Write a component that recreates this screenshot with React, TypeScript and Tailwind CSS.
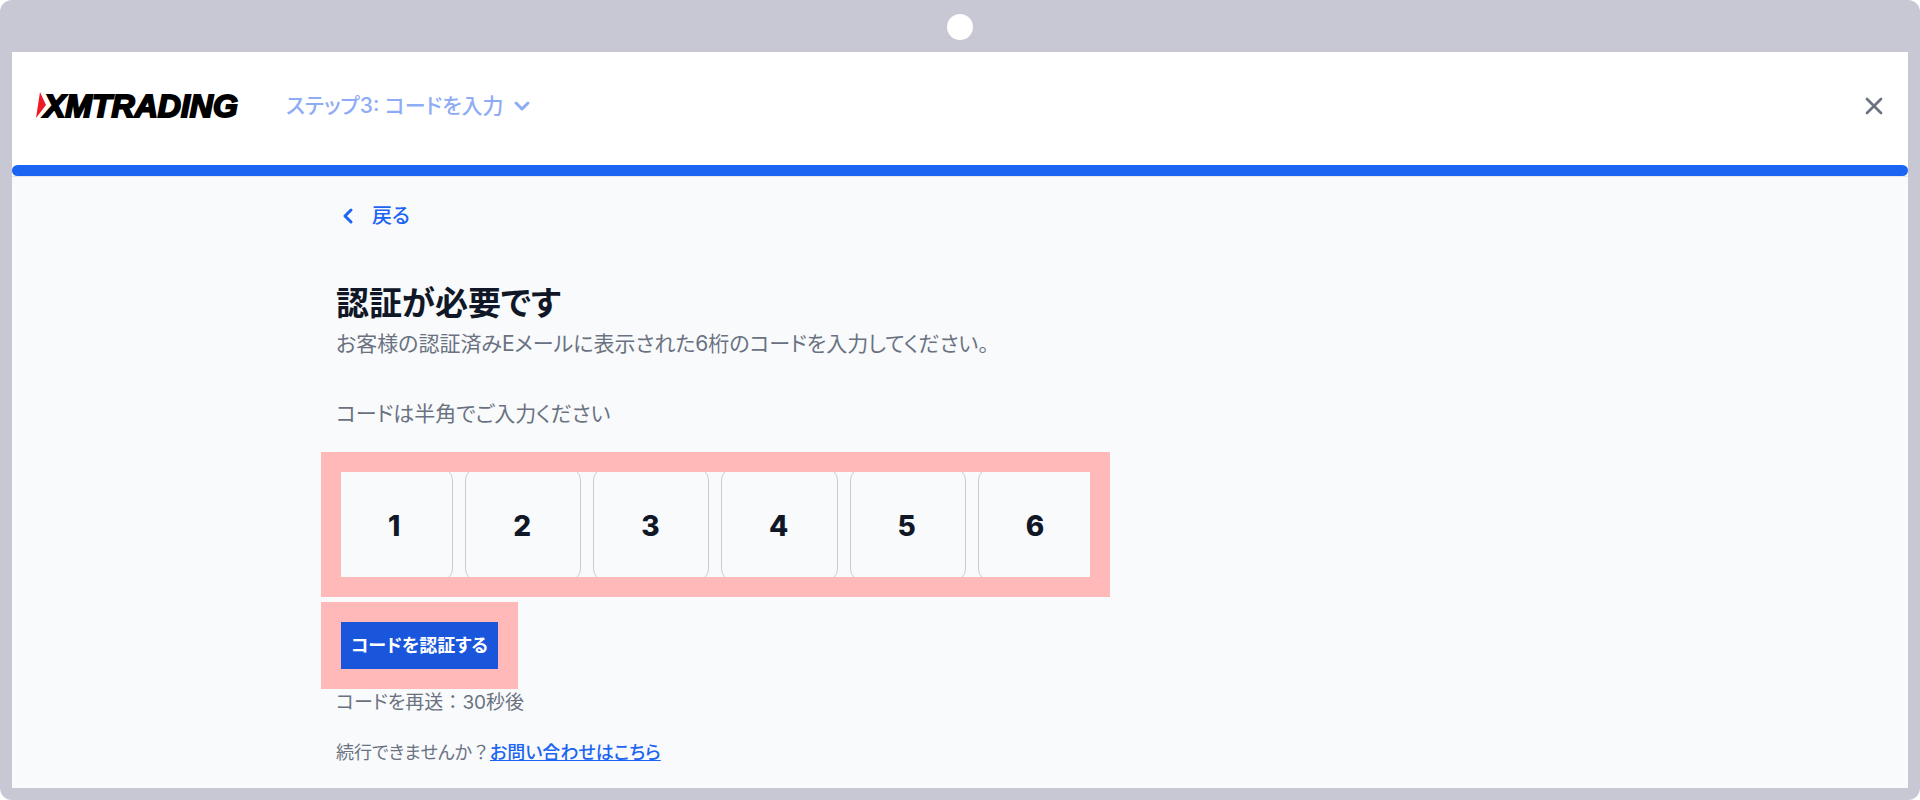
import React, { useState } from 'react';
import { ChevronDown, ChevronLeft, X } from 'lucide-react';

const Logo: React.FC = () => (
  <a href="#" aria-label="XMTRADING" className="block">
    <svg width="216" height="42" viewBox="0 0 216 42" className="block">
      <path d="M4 7 L10 20 L0 33 Z" fill="#ed1c24" />
      <text
        x="8"
        y="32"
        fontSize="32"
        fontWeight="700"
        fontStyle="italic"
        stroke="#000"
        strokeWidth="2"
        className="font-['Liberation_Sans',sans-serif]"
      >
        XMTRADING
      </text>
    </svg>
  </a>
);

const Header: React.FC = () => (
  <header className="bg-white border-b border-gray-200">
    <div className="h-[113px] pl-6 pr-5 pb-1.5 flex items-center justify-between">
      <div className="flex items-center gap-[34px]">
        <Logo />
        <button type="button" className="flex items-center gap-1.5 text-[21px] leading-8 font-medium text-[#8eabf5]">
          ステップ3: コードを入力
          <ChevronDown size={24} strokeWidth={3} />
        </button>
      </div>
      <button type="button" aria-label="閉じる" className="text-gray-500">
        <X size={28} strokeWidth={2.3} />
      </button>
    </div>
    <div className="h-[11px] rounded-md bg-[#1c64f2]" />
  </header>
);

const CodeInputs: React.FC = () => {
  const [digits, setDigits] = useState(['1', '2', '3', '4', '5', '6']);

  const handleChange = (index: number, value: string) => {
    setDigits(digits.map((d, i) => (i === index ? value.slice(-1) : d)));
  };

  return (
    <div className="max-w-[789px] border-20 border-[#ffb9b9] overflow-hidden">
      <div className="-m-1 grid grid-cols-6 gap-3">
        {digits.map((digit, i) => (
          <input
            key={i}
            type="text"
            inputMode="numeric"
            aria-label={`コード ${i + 1}桁目`}
            value={digit}
            onChange={(e) => handleChange(i, e.target.value)}
            className="w-full min-w-0 h-[113px] pt-0.5 pr-0.5 rounded-xl border border-[#c9ccd2] bg-gray-50 text-center font-['Inter',sans-serif] text-[28px] font-extrabold text-gray-900"
          />
        ))}
      </div>
    </div>
  );
};

const App: React.FC = () => {
  return (
    <div className="bg-white">
      <div
        lang="ja"
        className="min-h-screen flex flex-col rounded-xl bg-[#c8c7d4] px-3 pb-3 font-['Inter','Noto_Sans_CJK_JP',sans-serif] [font-feature-settings:'palt']"
      >
        <div className="h-[52px] pt-0.5 flex items-center justify-center">
          <span className="size-[26px] rounded-full bg-white" />
        </div>

        <div className="flex-1 flex flex-col bg-gray-50">
          <Header />

          <main className="w-full max-w-[1278px] mx-auto pt-[23px]">
            <div className="pl-[15px]">
              <a href="#" className="inline-flex items-center gap-3 text-xl leading-8 font-medium text-[#1c64f2]">
                <ChevronLeft size={24} strokeWidth={3} />
                戻る
              </a>
              <h1 className="mt-12 text-[33px] leading-[42px] font-bold text-gray-900">認証が必要です</h1>
              <p className="mt-0.5 text-[21px] leading-9 text-gray-500">
                お客様の認証済みEメールに表示された6桁のコードを入力してください。
              </p>
              <p className="mt-[34px] mb-5 text-[21px] leading-9 text-gray-500">
                コードは半角でご入力ください
              </p>
            </div>

            <CodeInputs />

            <div className="mt-[5px] w-fit border-20 border-[#ffb9b9]">
              <button type="button" className="block h-[47px] px-2.5 bg-[#1a56db] text-lg font-bold text-white">
                コードを認証する
              </button>
            </div>

            <div className="pl-[15px] text-gray-500">
              <p className="text-[19px] leading-7">
                コードを再送<span className="[font-feature-settings:normal]">：</span>30秒後
              </p>
              <p className="mt-[22px] text-lg leading-7">
                続行できませんか<span className="[font-feature-settings:normal]">？</span>
                <a href="#" className="font-medium text-[#1c64f2] underline">お問い合わせはこちら</a>
              </p>
            </div>
          </main>
        </div>
      </div>
    </div>
  );
};

export default App;
